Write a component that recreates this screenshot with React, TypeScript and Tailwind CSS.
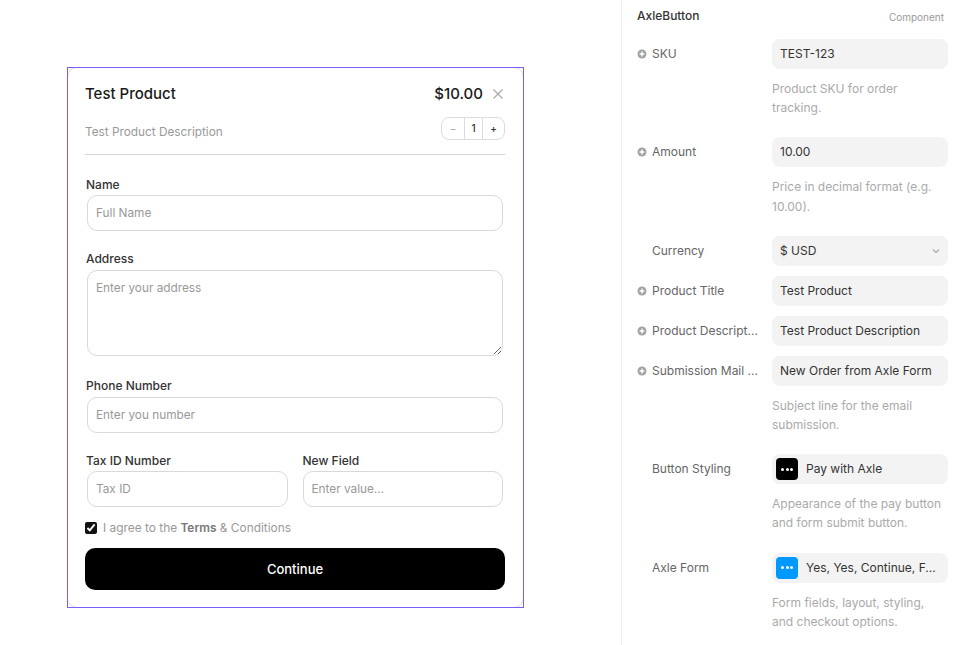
import React from "react";

const font = { fontFamily: "Inter, 'Liberation Sans', sans-serif" };

function PlusDot() {
  return (
    <svg width="10" height="10" viewBox="0 0 10 10" className="shrink-0">
      <circle cx="5" cy="5" r="4.5" fill="#a3a3a3" />
      <path d="M5 2.6v4.8M2.6 5h4.8" stroke="#fff" strokeWidth="1.4" />
    </svg>
  );
}

function Label({ text, plus = false }: { text: string; plus?: boolean }) {
  return (
    <div className="flex w-[135px] shrink-0 items-center gap-[5px]">
      {plus ? <PlusDot /> : <span className="w-[10px] shrink-0" />}
      <span className="whitespace-nowrap text-[12px] leading-[30px] text-[#666666]">{text}</span>
    </div>
  );
}

function Row({ label, value, plus = false }: { label: string; value: string; plus?: boolean }) {
  return (
    <div className="flex h-[30px] items-center">
      <Label text={label} plus={plus} />
      <div className="flex h-[30px] w-[176px] items-center rounded-[8px] bg-[#f3f3f3] px-2 text-[12px] font-normal text-[#333333]">
        <span className="whitespace-nowrap">{value}</span>
      </div>
    </div>
  );
}

function Help({ children }: { children: React.ReactNode }) {
  return (
    <div className="ml-[135px] w-[176px] pb-[10px] text-[12px] leading-[1.6] text-[#aaaaaa]">{children}</div>
  );
}

function SwatchRow({ label, value, bg }: { label: string; value: string; bg: string }) {
  return (
    <div className="flex h-[30px] items-center">
      <Label text={label} />
      <div className="flex h-[30px] w-[176px] items-center gap-2 rounded-[8px] bg-[#f3f3f3] pl-1 pr-2 text-[12px] text-[#333333]">
        <span className={`flex h-[22px] w-[22px] shrink-0 items-center justify-center gap-[1.5px] rounded-[4px] ${bg}`}>
          <i className="h-[3px] w-[3px] rounded-full bg-white" />
          <i className="h-[3px] w-[3px] rounded-full bg-white" />
          <i className="h-[3px] w-[3px] rounded-full bg-white" />
        </span>
        <span className="whitespace-nowrap">{value}</span>
      </div>
    </div>
  );
}

const inputCls =
  "h-[36px] w-full rounded-[10px] border border-[#d9d9d9] bg-white px-[8px] text-[11.8px] text-[#333333] outline-none placeholder:text-[#999999]";

const labelBase = "text-[12px] leading-[18px] font-medium text-[#333333]";
const labelCls = `-ml-px ${labelBase}`;

export default function App() {
  return (
    <div style={font} className="flex h-[645px] w-[960px] overflow-hidden bg-white">
      <div className="w-[621px] shrink-0 pl-[67px] pt-[67px]">
        <div className="relative h-[541px] w-[457px]">
          <div className="flex h-full flex-col rounded-[10px] border border-[#dddddd] pl-[17px] pr-[17px] pt-[16px]">
            <div className="flex h-[20px] items-center justify-between pr-px">
              <span className="text-[15px] font-medium text-[#1a1a1a]">Test Product</span>
              <div className="flex items-center gap-[9px]">
                <span className="text-[15px] font-medium text-[#1a1a1a]">$10.00</span>
                <svg width="12" height="12" viewBox="0 0 12 12" className="mr-px">
                  <path d="M1.5 1.5l9 9M10.5 1.5l-9 9" stroke="#a8a8a8" strokeWidth="1.1" />
                </svg>
              </div>
            </div>
            <div className="mt-[13px] flex h-[23px] items-center justify-between pr-px">
              <span className="mt-[8px] text-[11.8px] text-[#999999]">Test Product Description</span>
              <div className="flex h-[23px] w-[64px] items-stretch rounded-[8px] border border-[#dcdcdc] text-[10px] font-medium text-[#333333]">
                <span className="flex w-[22px] items-center justify-center text-[#b0b0b0]">−</span>
                <span className="flex w-[19px] items-center justify-center border-x border-[#dcdcdc]">1</span>
                <span className="flex flex-1 items-center justify-center">+</span>
              </div>
            </div>
            <div className="mr-px mt-[14px] h-px bg-[#d6d6d6]" />
            <div className="mt-[21px] flex flex-col pl-[2px] pr-[3px]">
              <label className={`mb-px ${labelCls}`}>Name</label>
              <input className={inputCls} placeholder="Full Name" />
              <label className={`mb-[2px] mt-[19px] ${labelCls}`}>Address</label>
              <textarea
                className="block h-[86px] w-full rounded-[10px] border border-[#d9d9d9] bg-white px-[8px] py-[9px] text-[11.8px] leading-[16px] outline-none placeholder:text-[#999999]"
                placeholder="Enter your address"
              />
              <label className={`mb-[2px] mt-[21px] ${labelCls}`}>Phone Number</label>
              <input className={inputCls} placeholder="Enter you number" />
              <div className="mt-[19px] flex gap-[15px]">
                <div className="flex min-w-0 flex-1 flex-col">
                  <label className={`mb-px ${labelCls}`}>Tax ID Number</label>
                  <input className={inputCls} placeholder="Tax ID" />
                </div>
                <div className="flex min-w-0 flex-1 flex-col">
                  <label className={`mb-px ${labelBase}`}>New Field</label>
                  <input className={inputCls} placeholder="Enter value..." />
                </div>
              </div>
            </div>
            <div className="mt-[13px] flex h-[15px] items-center gap-[6px]">
              <input type="checkbox" defaultChecked className="m-0 h-[12px] w-[12px] accent-[#111111]" />
              <span className="pt-px text-[11.9px] text-[#999999]">
                I agree to the <b className="font-semibold text-[#777777]">Terms</b> &amp; Conditions
              </span>
            </div>
            <button className="mt-[13px] h-[42px] w-[420px] rounded-[10px] bg-black pt-px text-[13px] font-medium text-white">
              Continue
            </button>
          </div>
          <div className="pointer-events-none absolute inset-0 border border-[#7c5cff]" />
        </div>
      </div>
      <div className="w-[339px] shrink-0 border-l border-[#efefef] pl-[15px]">
        <div className="flex h-[39px] w-[307px] items-center justify-between pb-[7px]">
          <span className="text-[12px] font-medium text-[#333333]">AxleButton</span>
          <span className="mt-[2px] text-[10px] text-[#999999]">Component</span>
        </div>
        <div className="flex flex-col">
          <Row label="SKU" value="TEST-123" plus />
          <div className="h-[10px]" />
          <Help>Product SKU for order tracking.</Help>
          <div className="h-[10px]" />
          <Row label="Amount" value="10.00" plus />
          <div className="h-[10px]" />
          <Help>Price in decimal format (e.g. 10.00).</Help>
          <div className="h-[10px]" />
          <div className="flex h-[30px] items-center">
            <Label text="Currency" />
            <div className="flex h-[30px] w-[176px] items-center justify-between rounded-[8px] bg-[#f3f3f3] pl-2 pr-[8px] text-[12px] text-[#333333]">
              <span>$ USD</span>
              <svg width="8" height="6" viewBox="0 0 8 6">
                <path d="M1 1.5l3 3 3-3" fill="none" stroke="#aaaaaa" strokeWidth="1.2" />
              </svg>
            </div>
          </div>
          <div className="h-[10px]" />
          <Row label="Product Title" value="Test Product" plus />
          <div className="h-[10px]" />
          <Row label="Product Descript..." value="Test Product Description" plus />
          <div className="h-[10px]" />
          <Row label="Submission Mail ..." value="New Order from Axle Form" plus />
          <div className="h-[10px]" />
          <Help>Subject line for the email submission.</Help>
          <div className="h-[10px]" />
          <SwatchRow label="Button Styling" value="Pay with Axle" bg="bg-black" />
          <div className="h-[10px]" />
          <Help>Appearance of the pay button and form submit button.</Help>
          <div className="h-[10px]" />
          <SwatchRow label="Axle Form" value="Yes, Yes, Continue, F..." bg="bg-[#0099ff]" />
          <div className="h-[10px]" />
          <Help>Form fields, layout, styling, and checkout options.</Help>
        </div>
      </div>
    </div>
  );
}
